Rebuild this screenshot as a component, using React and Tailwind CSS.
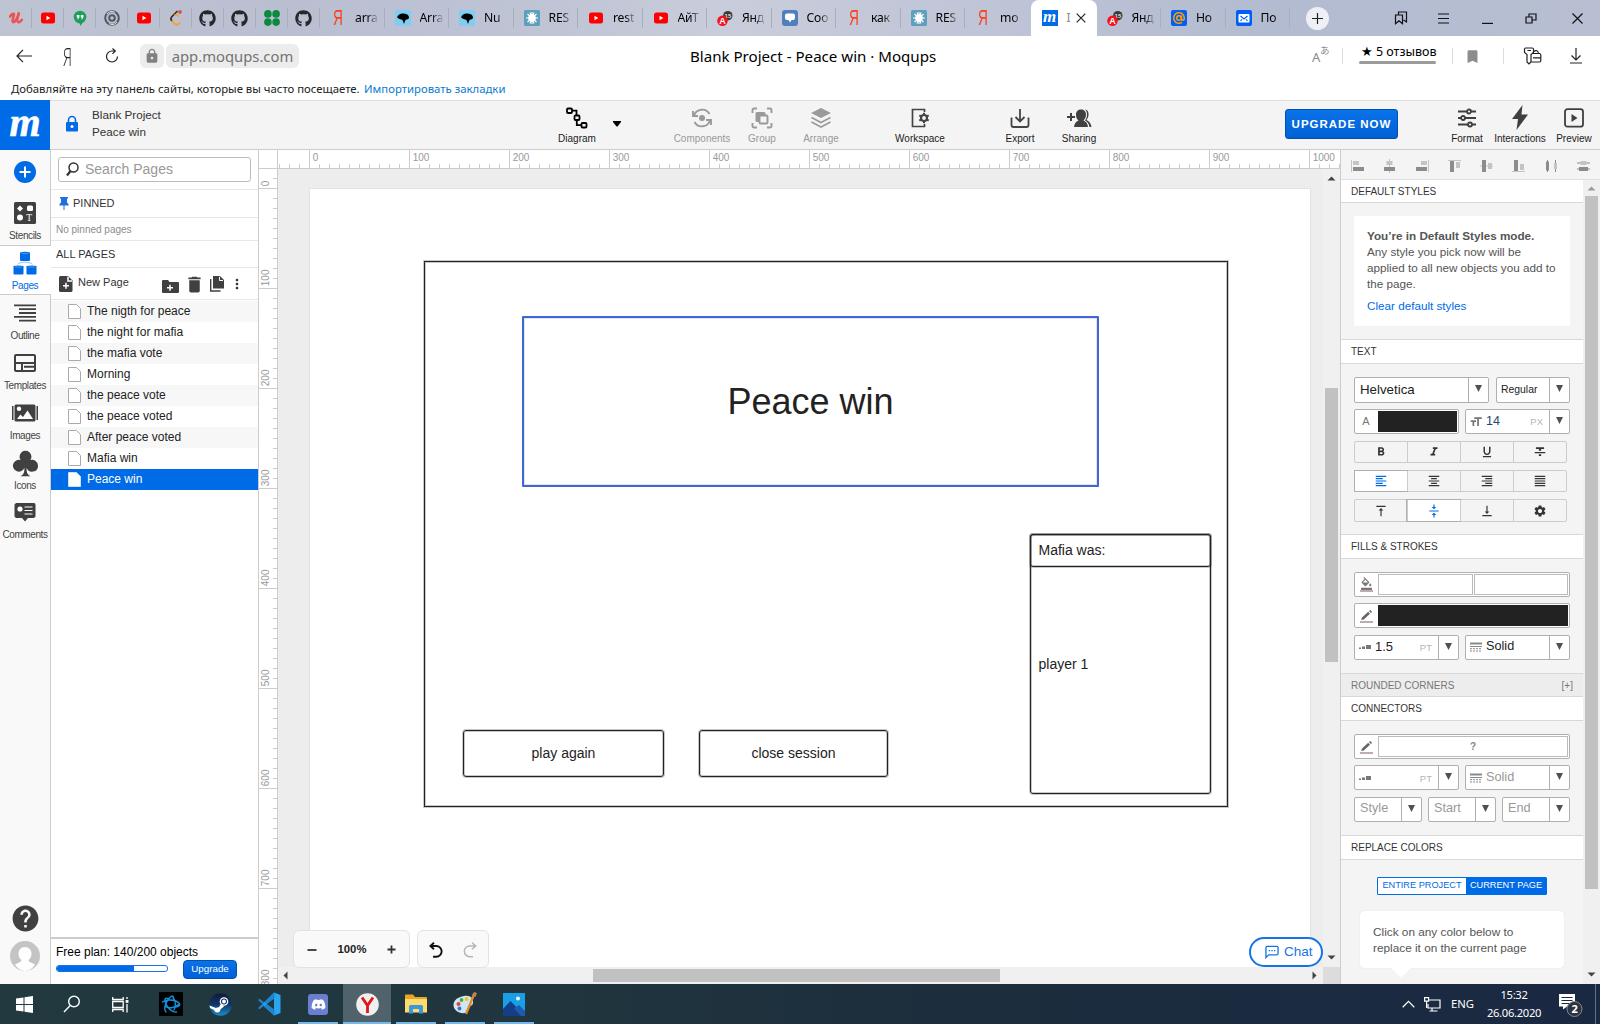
import React from "react";
import { FaGithub, FaYoutube, FaSteam, FaDiscord } from "react-icons/fa";
import { SiLeetcode } from "react-icons/si";
import {
  MdLock, MdHelp, MdBookmark, MdDelete, MdCreateNewFolder, MdMoreVert,
  MdFormatBold, MdFormatItalic, MdFormatUnderlined, MdFormatStrikethrough, MdFormatAlignLeft,
  MdFormatAlignCenter, MdFormatAlignRight, MdFormatAlignJustify, MdVerticalAlignTop,
  MdVerticalAlignCenter, MdVerticalAlignBottom, MdSettings, MdEdit, MdFormatColorFill, MdFormatSize,
} from "react-icons/md";
import { GiClubs } from "react-icons/gi";

const UI = "font-['Noto_Sans',sans-serif]";

/* ---------- browser tabs ---------- */
const Ya = () => <span className="font-['Liberation_Sans',sans-serif] text-[22px] leading-4 text-[#fc3f1d] scale-x-[.62] inline-block">Я</span>;
const Udemy = () => (
  <svg width="14" height="14" viewBox="0 0 14 14" fill="none" stroke="#ec5252" strokeLinecap="round" strokeLinejoin="round"><path d="M1 5.500C2.500 3.500 4.500 2 5 3.200c.4 1.300-2.500 6.300-1 7.800 1.500 1 4.500-3.500 5.700-8.500" strokeWidth="2.600" /><path d="M9.700 2.500C8.500 6.500 7.700 10.500 9 11.200c1.200.4 2.800-1 4-2.500" strokeWidth="2.400" /></svg>
);
const YouTube = () => (
  <svg width="16" height="16" viewBox="0 0 16 16"><rect x="1" y="2.500" width="14" height="11" rx="2.500" fill="#f00" /><path d="M6.500 5.700v4.600L10.300 8z" fill="#fff" /></svg>
);
const Bird = () => (
  <svg width="16" height="16" viewBox="0 0 16 16"><rect width="16" height="16" fill="#81cdf0" /><path d="M2 7.500C3 4 6 3 9 3.500c3 .2 5 1.800 5 4 0 1.500-1.500 2-3 2l-1 1.500-1 3-1.500-4-3-1z" fill="#000" /></svg>
);
const Rest = () => (
  <svg width="16" height="16" viewBox="0 0 16 16"><rect width="16" height="16" rx="1.500" fill="#5f9fbe" /><circle cx="8" cy="8" r="3.800" fill="#fff" /><path d="M8 2v12M2 8h12M3.500 4l9 8M12.500 4l-9 8M6 2.500l4 11M10 2.500l-4 11" stroke="#fff" strokeWidth="1.100" /></svg>
);
const YaA = () => (
  <svg width="17" height="17" viewBox="0 0 17 17"><circle cx="11.500" cy="5.500" r="5" fill="#3b3b3b" /><text x="8" y="8" fontSize="6.500" fontWeight="700" fill="#ddd" fontFamily="Liberation Sans">15</text><circle cx="5.800" cy="11" r="5.600" fill="#f5121d" /><text x="2.400" y="14.500" fontSize="9.500" fontWeight="700" fill="#fff" fontFamily="Liberation Sans">A</text></svg>
);
const ChatBlue = () => (
  <svg width="16" height="16" viewBox="0 0 16 16"><rect width="16" height="16" rx="3" fill="#4f80bd" /><path d="M5 3.500h6a2 2 0 0 1 2 2v2.500a2 2 0 0 1-2 2H9.500L8 12.500 6.500 10H5a2 2 0 0 1-2-2V5.500a2 2 0 0 1 2-2z" fill="#fff" /></svg>
);
const Moq = () => (
  <span className="flex h-4 w-4 items-center justify-center bg-[#006be6] font-['Liberation_Serif',serif] text-[17px] font-bold italic leading-3 text-white"><span className="-mt-[3px]">m</span></span>
);
const At = () => (
  <svg width="16" height="16" viewBox="0 0 16 16"><rect width="16" height="16" rx="2" fill="#005ff9" /><circle cx="8" cy="8" r="2.300" fill="none" stroke="#ff9e00" strokeWidth="1.500" /><path d="M10.500 5.500V9c0 2 3 1.500 2.800-1A5.300 5.300 0 1 0 11 12.400" fill="none" stroke="#ff9e00" strokeWidth="1.500" /></svg>
);
const Mail = () => (
  <svg width="16" height="16" viewBox="0 0 16 16"><rect width="16" height="16" rx="2" fill="#005ff9" /><rect x="2.500" y="4" width="11" height="8.500" rx="1" fill="#fff" /><path d="M4.500 6L8 9l3.500-3M4.500 10.800l1.500-1.500M11.500 10.800L10 9.300" stroke="#005ff9" strokeWidth="1.200" fill="none" /></svg>
);
const Hangouts = () => (
  <svg width="16" height="16" viewBox="0 0 16 16"><circle cx="8" cy="7" r="6.300" fill="#1e9e5a" /><path d="M7 12h4l-2.500 4z" fill="#1e9e5a" /><path d="M4.800 5h2.600v2.500L6 9.200H5.200L6 7.400H4.800zM8.800 5h2.600v2.500L10 9.200h-.8l.8-1.800H8.800z" fill="#fff" /></svg>
);
const Swirl = () => (
  <svg width="16" height="16" viewBox="0 0 16 16" fill="none" stroke="#4d5a63"><circle cx="8" cy="8" r="6.800" strokeWidth="2" /><circle cx="8" cy="8" r="4.500" stroke="#b9c0c8" strokeWidth="1.500" /><circle cx="8" cy="8" r="2.800" strokeWidth="2" /><path d="M3 4c2-3 6-3 8-1.500M13 12c-2 3-6 3-8 1.500" stroke="#dfe3e8" /></svg>
);
const Clover = () => (
  <svg width="16" height="16" viewBox="0 0 16 16" fill="#0a8a3c"><circle cx="3.900" cy="3.900" r="3.800" /><circle cx="12.100" cy="3.900" r="3.800" /><circle cx="3.900" cy="12.100" r="3.800" /><circle cx="12.100" cy="12.100" r="3.800" /></svg>
);
const Leet = () => (
  <svg width="16" height="16" viewBox="0 0 16 16" fill="none"><path d="M9.500 1L4 6.500C2.500 8 2.500 9.500 4 11" stroke="#3a3226" strokeWidth="1.700" /><path d="M4 11l2.500 2.700c1.500 1.500 3 1.500 4.500 0l1-1.200" stroke="#f6a31c" strokeWidth="1.800" /><path d="M11 6.500L9.500 5.300C8.500 4.500 7.500 4.500 6.500 5" stroke="#f6a31c" strokeWidth="1.500" /><path d="M6.500 9.300H13" stroke="#c9c2b4" strokeWidth="1.500" /><circle cx="12" cy="2" r="1.900" fill="#d9564b" /></svg>
);
const pinned = [
  <Udemy />, <YouTube />, <Hangouts />, <Swirl />, <YouTube />, <Leet />,
  <FaGithub size={17} color="#23282d" />, <FaGithub size={17} color="#23282d" />, <Clover />, <FaGithub size={17} color="#23282d" />,
];
const tabs = [
  [<Ya />, "arra"], [<Bird />, "Arra"], [<Bird />, "Nu"], [<Rest />, "RES"], [<YouTube />, "rest"], [<YouTube />, "АйТ"],
  [<YaA />, "Янд"], [<ChatBlue />, "Соо"], [<Ya />, "как"], [<Rest />, "RES"], [<Ya />, "mo"],
];
const tabs2 = [[<YaA />, "Янд"], [<At />, "Но"], [<Mail />, "По"]];

function Tab({ icon, text, last }) {
  return (
    <div className="relative flex h-9 w-[64.500px] shrink-0 items-center">
      <div className="ml-[10px] flex w-4 shrink-0 justify-center">{icon}</div>
      <div className="ml-[9px] w-[26px] shrink-0 whitespace-nowrap text-[12.200px] tracking-[-.2px] text-black [mask-image:linear-gradient(90deg,#000_12px,transparent_24px)]">{text}</div>
      {!last && <div className="ml-auto h-5 w-px shrink-0 bg-[#a9aebd]" />}
    </div>
  );
}

function TabBar() {
  return (
    <div className={"flex h-9 items-center bg-[linear-gradient(90deg,#bfc4d3_0%,#b9bed1_18%,#bfc5d5_35%,#c9cddb_45%,#bfc4d7_62%,#b2bbd0_80%,#b8bfd3_100%)] " + UI}>
      {pinned.map((p, i) => (
        <div key={i} className="flex h-9 w-8 shrink-0 items-center">
          <div className="flex w-[31px] justify-center">{p}</div>
          <div className="h-5 w-px bg-[#a9aebd]" />
        </div>
      ))}
      {tabs.map(([ic, t], i) => <Tab key={i} icon={ic} text={t} last={i === tabs.length - 1} />)}
      <div className="ml-px flex h-9 w-[66px] shrink-0 items-center rounded-t-lg bg-white">
        <div className="ml-[11px]"><Moq /></div>
        <div className="ml-[9px] w-[4px] text-[12px] text-[#888]">I</div>
        <svg className="ml-[5px]" width="10" height="10" viewBox="0 0 10 10" stroke="#222" strokeWidth="1.200"><path d="M.7.7l8.600 8.600M9.300.7L.7 9.300" /></svg>
      </div>
      {tabs2.map(([ic, t], i) => <Tab key={i} icon={ic} text={t} />)}
      <div className="ml-[16px] flex h-[23px] w-[23px] shrink-0 items-center justify-center rounded-full bg-[#eef0f5]">
        <svg width="11" height="11" viewBox="0 0 11 11" stroke="#222" strokeWidth="1.200"><path d="M5.500 0v11M0 5.500h11" /></svg>
      </div>
      <div className="ml-auto flex items-center pr-[17px]">
        <svg width="14" height="14" viewBox="0 0 14 14" fill="none" stroke="#111" strokeWidth="1.200"><path d="M1.500 12.700V4h7v8.700L5 9.800zM4.500 4V1h8v10l-3-2" /></svg>
        <svg className="ml-[30px]" width="12" height="11" viewBox="0 0 12 11" stroke="#111" strokeWidth="1.100"><path d="M0 1h11M0 5.500h11M0 10h11" /></svg>
        <svg className="ml-[32px]" width="11" height="11" viewBox="0 0 11 11" stroke="#111" strokeWidth="1.200"><path d="M0 10.400h11" /></svg>
        <svg className="ml-[32px]" width="12" height="11" viewBox="0 0 12 11" fill="none" stroke="#111" strokeWidth="1.200"><path d="M1 4h6v6H1zM4 4V1h7v6H7" /></svg>
        <svg className="ml-[35px]" width="11" height="11" viewBox="0 0 11 11" stroke="#111" strokeWidth="1.200"><path d="M.5.5l10 10M10.500.5l-10 10" /></svg>
      </div>
    </div>
  );
}

function AddressBar() {
  return (
    <div className={"flex h-10 items-center bg-white " + UI}>
      <svg className="ml-[16px]" width="16" height="14" viewBox="0 0 16 14" fill="none" stroke="#222" strokeWidth="1.200"><path d="M7 .8L1 7l6 6.200M1 7h15" /></svg>
      <div className="ml-[25px] w-[22px] text-center font-['Open_Sans',sans-serif] text-[25px] font-light leading-6 text-[#222]"><span className="inline-block scale-x-[.6]">Я</span></div>
      <svg className="ml-[26px]" width="14" height="16" viewBox="0 0 14 16" fill="none" stroke="#222" strokeWidth="1.200"><path d="M12.500 8.500a5.500 5.500 0 1 1-5.500-5.500h3M7.500.5L10.300 3 7.500 5.800" /></svg>
      <div className="ml-[21px] flex h-6 w-6 items-center justify-center rounded-md bg-[#ececec]"><MdLock size={16} color="#808080" /></div>
      <div className="ml-[2px] flex h-6 w-[133px] items-center justify-center rounded-md bg-[#ececec] text-[14.800px] text-[#737373]">app.moqups.com</div>
      <div className="ml-[391px] w-[250px] whitespace-nowrap text-[15.100px] text-black">Blank Project - Peace win · Moqups</div>
      <div className="ml-auto flex items-center pr-[17px]">
        <span className="relative h-4 w-4 text-[#8a8a8a]"><span className="absolute -left-px top-0 text-[13px]">A</span><span className="absolute left-[7px] top-[-5px] font-['Noto_Sans_CJK_JP',sans-serif] text-[9.500px]">あ</span></span>
        <div className="ml-[13px] h-4 w-px bg-[#ddd]" />
        <div className="ml-[16px] flex w-[77px] flex-col">
          <div className="-mt-[5px] whitespace-nowrap pl-0.5 text-[12.500px] leading-[18px] text-black"><span className="font-['DejaVu_Sans',sans-serif] text-[13px]">★</span> 5 отзывов</div>
          <div className="h-[3px] rounded-full bg-[#9b9b9b]" />
        </div>
        <div className="ml-[16px] h-4 w-px bg-[#ddd]" />
        <div className="ml-[11px]"><MdBookmark size={17} color="#8c8c8c" /></div>
        <div className="ml-[22px] h-4 w-px bg-[#ddd]" />
        <svg className="ml-[19px]" width="19" height="18" viewBox="0 0 19 18" fill="none" stroke="#222" strokeWidth="1.200"><path d="M2.800 1h6.400q1.300 0 1.300 1.300V5.500L8 7.500v7.500L6 17l-2-2V7.500L1.500 5.500V2.300Q1.500 1 2.800 1zM4.500 3.500h3.500M10.500 4.500Q15 2 15.500 6.500M9 6.500h7.300q1.500 0 1.500 1.500v5.500q0 1.500-1.500 1.500H8.300M10 10.800h7.500" /></svg>
        <svg className="ml-[27px]" width="14" height="16" viewBox="0 0 14 16" fill="none" stroke="#222" strokeWidth="1.200"><path d="M7 0v11.500M2.500 7.500L7 12l4.500-4.500M1 15h12" /></svg>
      </div>
    </div>
  );
}

function BookmarkBar() {
  return (
    <div className={"flex h-[24px] items-center whitespace-nowrap bg-white pl-[11px] pt-0.5 text-[11.350px] " + UI}>
      <span className="w-[353px] text-[#222]">Добавляйте на эту панель сайты, которые вы часто посещаете.</span>
      <span className="text-[#0a7bd0]">Импортировать закладки</span>
    </div>
  );
}

/* ---------- app toolbar ---------- */
function Tool({ cls, label, children, dim }) {
  return (
    <div className={"flex h-[48px] shrink-0 flex-col items-center pt-[4px] " + cls + (dim ? " text-[#9a9a9a]" : " text-[#3f3f3f]")}>
      <div className="flex h-[25px] items-center justify-center">{children}</div>
      <div className={"mt-[3px] text-[10px] leading-[12px] " + (dim ? "text-[#999]" : "text-[#1b1b1b]")}>{label}</div>
    </div>
  );
}

function Toolbar() {
  return (
    <div className="flex h-[50px] border-b border-[#ccc] border-t border-t-[#dcdcdc] bg-[#f4f4f4]">
      <div className="-mt-px flex h-[50px] w-[50px] shrink-0 items-center justify-center bg-[#006be6] font-['Liberation_Serif',serif] text-[40px] font-bold italic leading-none text-white"><span className="-mt-[5px] [-webkit-text-stroke:.6px_white]">m</span></div>
      <svg className="ml-[15px] mt-[14px] shrink-0" width="14" height="18" viewBox="0 0 14 18"><path d="M3.500 8V5a3.500 3.500 0 0 1 7 0v3" fill="none" stroke="#006be6" strokeWidth="1.600" /><rect x="1" y="7" width="12" height="9.500" rx="1" fill="#006be6" /><circle cx="7" cy="11.500" r="1.500" fill="#fff" /></svg>
      <div className="ml-[13px] mt-[6px] w-[455px] text-[11.700px] leading-[16.500px] text-[#333]"><div>Blank Project</div><div>Peace win</div></div>
      <Tool cls="w-[60px]" label="Diagram"><svg width="22" height="22" viewBox="0 0 22 22" fill="none" stroke="#000" strokeWidth="1.800"><rect x="1" y="1.500" width="5" height="4.500" rx="1" /><rect x="8.500" y="8.500" width="5" height="4.500" rx="1" /><rect x="15.500" y="16" width="5" height="4.500" rx="1" /><path d="M6 3.700h4.500v4.800M10.800 13v5.200h4.700" /></svg></Tool>
      <svg className="ml-[5px] mt-[19px] w-[10px] shrink-0" width="10" height="7" viewBox="0 0 10 7"><path d="M1 1h8v1L5.500 6.500h-1L1 2z" fill="#000" /></svg>
      <Tool dim cls="ml-[48px] w-[64px]" label="Components"><svg width="22" height="22" viewBox="0 0 22 22" fill="none" stroke="currentColor" strokeWidth="1.900"><path d="M3 8.500A8.500 8.500 0 0 1 18.500 7M19 13.500A8.500 8.500 0 0 1 3.500 15M2 4v5h5M20 18v-5h-5" /><circle cx="11" cy="11" r="3" fill="currentColor" stroke="none" /></svg></Tool>
      <Tool dim cls="ml-[8px] w-[40px]" label="Group"><svg width="22" height="22" viewBox="0 0 22 22" fill="none" stroke="currentColor" strokeWidth="1.900"><path d="M1.500 6V3a1.500 1.500 0 0 1 1.500-1.500h3M16 1.500h3A1.500 1.500 0 0 1 20.500 3v3M20.500 16v3a1.500 1.500 0 0 1-1.500 1.500h-3M6 20.500H3A1.500 1.500 0 0 1 1.500 19v-3" /><rect x="4.500" y="5" width="10" height="10" rx="1.500" fill="currentColor" stroke="none" /><rect x="8.500" y="8.500" width="8" height="8" rx="1" fill="#f4f4f4" /></svg></Tool>
      <Tool dim cls="ml-[15px] w-[48px]" label="Arrange"><svg width="22" height="22" viewBox="0 0 22 22" fill="none" stroke="currentColor" strokeWidth="1.600"><path d="M11 1l10 5-10 5L1 6z" fill="currentColor" stroke="none" /><path d="M1.500 10.500l9.500 5 9.500-5M1.500 15l9.500 5 9.500-5" /></svg></Tool>
      <Tool cls="ml-[45px] w-[60px]" label="Workspace"><svg width="20" height="22" viewBox="0 0 20 22" fill="none" stroke="#444" strokeWidth="1.700"><path d="M14.500 5V2.500h-12v17h12V17" /><circle cx="14" cy="11" r="3" strokeWidth="2.200" /><path d="M14 5.700v2M14 14.300v2M9.300 8.300l1.700 1M17 12.700l1.700 1M9.300 13.700l1.700-1M17 9.300l1.700-1" strokeWidth="2" /></svg></Tool>
      <Tool cls="ml-[50px] w-[40px]" label="Export"><svg width="20" height="22" viewBox="0 0 20 22" fill="none" stroke="#444" strokeWidth="1.800"><path d="M10 2v12.500M5.500 10L10 14.500 14.500 10M1.500 10.500V18a2 2 0 0 0 2 2h13a2 2 0 0 0 2-2v-7.500" /></svg></Tool>
      <Tool cls="ml-[17px] w-[44px]" label="Sharing"><svg width="25" height="20" viewBox="0 0 25 20" fill="#404040"><path d="M0 8h3V5h2v3h3v2H5v3H3v-3H0zM7 19c.5-4 2-5.500 4.500-6.500C9.500 11 9 9 9 6.500 9 3.500 11 1.500 14 1.500s5 2 5 5c0 2.500-1 4.500-2.500 6 2.500 1 4 2.500 4.500 6.500zM18 1.500c3 .5 3.800 3 3.500 5.500-.2 2-.8 3.500-2 5 3 1.500 4.500 3.500 5 7h-2c-.4-3-1.800-5-4.500-6.500C19.500 10.500 20 9 20 6.500c0-2-.5-3.800-2-5z" /></svg></Tool>
      <div className="ml-[184px] mt-[8px] flex h-[30px] w-[113px] shrink-0 items-center justify-center whitespace-nowrap rounded-[3px] border border-[#0052b0] bg-[linear-gradient(#0a72ea,#0061d3)] pt-px text-[11.500px] font-bold tracking-[1px] text-white">UPGRADE NOW</div>
      <Tool cls="ml-[47px] w-[44px]" label="Format"><svg width="20" height="20" viewBox="0 0 20 20" stroke="#3f3f3f" strokeWidth="1.800" fill="#f4f4f4"><path d="M1 3.500h18M1 10h18M1 16.500h18" /><circle cx="12" cy="3.500" r="2" /><circle cx="6" cy="10" r="2" /><circle cx="13" cy="16.500" r="2" /></svg></Tool>
      <Tool cls="ml-[3px] w-[56px]" label="Interactions"><svg width="18" height="25" viewBox="0 0 18 25" fill="#3f3f3f"><path d="M11.500 0L1 14h6L5.500 25 17 9.500h-6.500z" /></svg></Tool>
      <Tool cls="ml-[4px] w-[44px]" label="Preview"><svg width="20" height="20" viewBox="0 0 20 20"><rect x="1" y="1.200" width="18" height="17.500" rx="2.500" fill="none" stroke="#3f3f3f" strokeWidth="1.800" /><path d="M7.500 6v8l6-4z" fill="#3f3f3f" /></svg></Tool>
    </div>
  );
}

/* ---------- left rail ---------- */
function RailItem({ label, active, children, h = "h-[50px]" }) {
  return (
    <div className={"relative flex flex-col items-center justify-end pb-[3px] " + h + (active ? " z-10 w-[51px] border-y border-[#ccc] bg-white !pb-[2px] text-[#006be6]" : " w-[50px] text-[#404040]")}>
      <div className={"flex h-[26px] items-center " + (active ? "pr-px" : "")}>{children}</div>
      <div className={"mt-[4px] whitespace-nowrap text-[10px] leading-[12px] tracking-[-.4px] " + (active ? "pr-px text-[#006be6]" : "text-[#444]")}>{label}</div>
    </div>
  );
}

function Rail() {
  return (
    <div className="flex w-[51px] shrink-0 flex-col border-r border-[#ccc] bg-[#f9f9f9]">
      <div className="flex h-[46px] w-[50px] justify-center pt-[11px]">
        <svg width="22" height="22" viewBox="0 0 22 22"><circle cx="11" cy="11" r="11" fill="#006be6" /><path d="M11 5.500v11M5.500 11h11" stroke="#fff" strokeWidth="2" /></svg>
      </div>
      <RailItem label="Stencils" h="h-[49px]"><svg width="22" height="22" viewBox="0 0 22 22"><rect width="22" height="22" rx="1.500" fill="#404040" /><g fill="#fff"><path d="M6 3.500L9 6.500 6 9.500 3 6.500z" /><rect x="13" y="3.500" width="6" height="5.500" rx="1.500" /><circle cx="6" cy="15.500" r="3" /></g><text x="12.300" y="19" fontSize="9.500" fill="#fff" fontFamily="Liberation Serif">T</text></svg></RailItem>
      <RailItem label="Pages" active><svg width="24" height="24" viewBox="0 0 24 24" fill="#006be6"><path d="M7 1.500Q12 0 17 1.500V9q0 1-1 1H8q-1 0-1-1zM.5 15q5-1.200 10 0v7.500q0 1-1 1h-8q-1 0-1-1zM13.500 15q5-1.200 10 0v7.500q0 1-1 1h-8q-1 0-1-1z" /><path d="M4.500 13.300C6 11.500 9 11.500 12 11.200c3 .3 6 .3 7.500 2.100" fill="none" stroke="#7fb4f2" strokeWidth=".8" /><path d="M8.500 2.500h7M2 16h7M15 16h7" stroke="#66a6f0" strokeWidth=".7" /></svg></RailItem>
      <RailItem label="Outline"><svg width="22" height="18" viewBox="0 0 22 18" stroke="#404040" strokeWidth="1.800"><path d="M0 1.300h22M5 5.200h17M5 9h17M0 12.800h22M5 16.700h17" /></svg></RailItem>
      <RailItem label="Templates"><svg width="22" height="18" viewBox="0 0 22 18" fill="none" stroke="#404040" strokeWidth="2"><rect x="1" y="1" width="20" height="16" rx="1" /><path d="M1 9h20M8 9v8M10 12.700h10" /></svg></RailItem>
      <RailItem label="Images"><svg width="26" height="18" viewBox="0 0 26 18" fill="#404040"><path d="M0 2h1.500v14H0zM24.500 2H26v14h-1.500z" /><rect x="2.500" y=".5" width="21" height="17" rx="1.500" /><g fill="#fff"><circle cx="7" cy="4.800" r="2.200" /><path d="M5 15l3.500-4.500 2.500 2.500 4.500-6.500L21 15z" /></g></svg></RailItem>
      <RailItem label="Icons"><GiClubs size={29} /></RailItem>
      <RailItem label="Comments" h="h-[49px]"><svg width="22" height="19" viewBox="0 0 22 19" fill="#404040"><path d="M2 0h18a1.500 1.500 0 0 1 1.500 1.500v12L20 15h-6l-3 3.500L8 15H2L.5 13.500v-12z" /><circle cx="6" cy="6" r="2.600" fill="#fff" /><path d="M10.500 4h8M10.500 7.500h8M10.500 11h8" stroke="#fff" /></svg></RailItem>
      <div className="mt-auto flex w-[50px] flex-col items-center pb-[13px]">
        <MdHelp size={31} color="#404040" />
        <svg className="mt-[7px]" width="30" height="30" viewBox="0 0 30 30"><circle cx="15" cy="15" r="15" fill="#c4c4c4" /><path d="M15 6c4 0 6.500 3 6.500 6.500S20 18 18.500 19l.5 1.500 6 3A13 13 0 0 1 15 30a13 13 0 0 1-10-6.500l6-3 .5-1.500C10 18 8.500 16 8.500 12.500S11 6 15 6z" fill="#fff" /></svg>
      </div>
    </div>
  );
}

/* ---------- pages panel ---------- */
const pages = ["The nigth for peace", "the night for mafia", "the mafia vote", "Morning", "the peace vote", "the peace voted", "After peace voted", "Mafia win", "Peace win"];

function PagesPanel() {
  return (
    <div className="flex w-[208px] shrink-0 flex-col border-r border-[#ccc] bg-white">
      <div className="h-[40px] border-b border-[#e8e8e8] px-[7px] pt-[7px]">
        <div className="flex h-[25px] w-[193px] items-center rounded-[3px] border border-[#bbb] pl-[7px] text-[14px] text-[#999]">
          <svg className="mr-[6px]" width="13" height="15" viewBox="0 0 13 15" fill="none" stroke="#333"><circle cx="7.500" cy="5.500" r="4.500" strokeWidth="1.500" /><path d="M4.500 9L1 13.500" strokeWidth="2.200" /></svg>
          Search Pages
        </div>
      </div>
      <div className="flex h-[28px] items-center border-b border-[#e8e8e8] pl-[8px] text-[11px] text-[#333]">
        <svg width="10" height="15" viewBox="0 0 10 15" fill="#1f6fe0" className="mr-[4px]"><path d="M1 1h8v1.500H8v4L9.500 8v1.500H.5V8L2 6.500v-4H1zM4.500 9.500h1V14h-1z" /></svg>
        PINNED
      </div>
      <div className="flex h-[23px] items-center border-b border-[#e8e8e8] pl-[5px] text-[10px] text-[#8c8c8c]">No pinned pages</div>
      <div className="flex h-[27px] items-center border-b border-[#e8e8e8] pl-[5px] pt-px text-[11px] text-[#333]">ALL PAGES</div>
      <div className="flex h-[32px] items-center border-b border-[#e8e8e8] pl-[8px] text-[11px] text-[#333]">
        <svg width="14" height="16" viewBox="0 0 14 16"><path d="M1.500 0H9l4.500 4.500v10Q13.500 16 12 16H1.500Q0 16 0 14.500v-13Q0 0 1.500 0z" fill="#404040" /><path d="M9 .8V5h4M7 6.800v6M4 9.800h6" stroke="#fff" strokeWidth="1.500" fill="none" /></svg>
        <span className="-mt-[3px] ml-[5px] w-[84px]">New Page</span>
        <svg className="mt-[5px]" width="17" height="13" viewBox="0 0 17 13"><path d="M1 0h5l1.500 2H16q1 0 1 1v9q0 1-1 1H1q-1 0-1-1V1q0-1 1-1z" fill="#404040" /><path d="M8 4.700v6M5 7.700h6" stroke="#fff" strokeWidth="1.500" /></svg>
        <MdDelete size={21} color="#404040" className="ml-[5px] mt-px" />
        <svg className="ml-[5px] mt-px" width="14" height="16" viewBox="0 0 14 16" fill="#404040"><path d="M3 0h7l4 4v8.500H3z" /><path d="M9.500 .8V4.500h3.500" stroke="#fff" fill="none" /><path d="M.7 3v12h9.800" stroke="#404040" strokeWidth="1.400" fill="none" /></svg>
        <MdMoreVert size={16} color="#333" className="ml-[5px] mt-px" />
      </div>
      <div className="mt-px">
        {pages.map((p, i) => (
          <div key={p} className={"flex h-[21px] items-center pb-px pl-[17px] text-[12px] " + (i === 8 ? "bg-[#006be6] text-white" : i % 2 ? "text-[#222]" : "bg-[#f7f7f7] text-[#222]")}>
            <svg className="mr-[6px]" width="13" height="15" viewBox="0 0 13 15"><path d="M.5.500h8l4 4v10H.5z" fill="#fff" stroke={i === 8 ? "#cfe1fa" : "#aaa"} /></svg>
            <span className="-mt-px">{p}</span>
          </div>
        ))}
      </div>
      <div className="mt-auto h-[47px] border-t-2 border-[#ccc] pl-[5px] pt-[6px]">
        <div className="text-[12px] leading-[14px] text-black">Free plan: 140/200 objects</div>
        <div className="flex">
          <div className="mt-[6px] h-[7px] w-[112px] overflow-hidden rounded-[3px] border border-[#1473e6]"><div className="h-full w-[77px] bg-[#006be6]" /></div>
          <div className="ml-[15px] mt-px flex h-[19px] w-[54px] items-center justify-center rounded-sm border border-[#0052b0] bg-[linear-gradient(#0a72ea,#0061d3)] text-[9.800px] text-white">Upgrade</div>
        </div>
      </div>
    </div>
  );
}

/* ---------- rulers and canvas ---------- */
const range = (n) => Array.from({ length: n }, (_, i) => i);

function TopRuler() {
  return (
    <div className="flex h-[19px] border-b border-[#ccc] bg-white">
      <div className="w-[19px] shrink-0 border-r border-[#ccc]" />
      <svg width="1062" height="18" className="shrink-0">
        {range(107).map((i) => {
          const v = i - 3;
          const x = 31.5 + v * 10;
          return <path key={i} d={v % 10 === 0 ? `M${x} 0V18` : `M${x} 14V18`} stroke="#ccc" />;
        })}
        {range(11).map((i) => <text key={i} x={34.700 + i * 100} y="10.500" fontSize="10" fill="#999" fontFamily="Liberation Sans">{i * 100}</text>)}
      </svg>
    </div>
  );
}

function SideRuler() {
  return (
    <div className="w-[19px] shrink-0 overflow-hidden border-r border-[#ccc] bg-white">
      <svg width="18" height="815">
        {range(82).map((i) => {
          const v = i - 1;
          const y = 19.5 + v * 10;
          return <path key={i} d={v % 10 === 0 ? `M0 ${y}H18` : `M14 ${y}H18`} stroke="#ccc" />;
        })}
        {range(9).map((i) => <text key={i} transform={`translate(9.500 ${17.200 + i * 100}) rotate(-90)`} fontSize="10" fill="#999" fontFamily="Liberation Sans">{i * 100}</text>)}
      </svg>
    </div>
  );
}

const STROKE = "absolute border border-[#222] shadow-[0_0_0_1px_rgba(34,34,34,.25),inset_0_0_0_1px_rgba(34,34,34,.25)] text-[14px] text-[#222] flex items-center ";

function Canvas() {
  return (
    <div className="relative z-10 flex-1 bg-[#ededed]">
      {/* artboard; its objects are placed freely */}
      <div className="absolute bottom-0 left-[31px] top-[19px] w-[1002px] border border-b-0 border-[#e2e2e2] bg-white">
        <div className={STROKE + "left-[114px] top-[72px] h-[546px] w-[804px]"} />
        <div className="absolute left-[212px] top-[127px] flex h-[171px] w-[577px] items-center justify-center rounded-[1px] border-2 border-[#3f67d2] text-[36px] text-[#222] shadow-[inset_0_0_0_1px_rgba(34,34,34,.12)]">Peace win</div>
        <div className={STROKE + "left-[720px] top-[345px] h-[260px] w-[181px] rounded-[3px] pl-[7.500px]"}>player 1</div>
        <div className={STROKE + "left-[720px] top-[345px] h-[33px] w-[181px] rounded-[3px] pl-[7.500px]"}>Mafia was:</div>
        <div className={STROKE + "left-[153px] top-[541px] h-[47px] w-[201px] justify-center rounded-[3px]"}>play again</div>
        <div className={STROKE + "left-[389px] top-[541px] h-[47px] w-[189px] justify-center rounded-[3px]"}>close session</div>
      </div>
      {/* floating controls */}
      <div className="absolute -bottom-px left-[15px] z-20 flex h-[38px] w-[117px] items-center justify-between rounded-md border border-[#e2e2e2] bg-[#f9f9f9] px-[13px] pt-px text-[11.300px] font-bold text-[#222]">
        <svg width="10" height="10" viewBox="0 0 10 10" stroke="#333" strokeWidth="1.800"><path d="M.5 5h9" /></svg>100%
        <svg width="9" height="9" viewBox="0 0 9 9" stroke="#333" strokeWidth="1.800"><path d="M.5 4.500h8M4.500.5v8" /></svg>
      </div>
      <div className="absolute -bottom-px left-[139px] z-20 flex h-[38px] w-[72px] items-center justify-between rounded-md border border-[#e2e2e2] bg-[#f9f9f9] px-[11px] pt-px">
        <svg width="14" height="16" viewBox="0 0 14 16" fill="none" stroke="#111" strokeWidth="1.900"><path d="M5 .7L1.300 4 5 7.300M1.300 4h6a5.300 5.300 0 0 1 0 10.700H4" /></svg>
        <svg width="14" height="16" viewBox="0 0 14 16" fill="none" stroke="#b5b5b5" strokeWidth="1.500" className="-scale-x-100"><path d="M5 .7L1.300 4 5 7.300M1.300 4h6a5.300 5.300 0 0 1 0 10.700H4" /></svg>
      </div>
      <div className="absolute bottom-0 left-[971px] z-20 flex h-[30px] w-[74px] items-center rounded-full border-2 border-[#1473e6] bg-white pl-[14px] text-[13.500px] text-[#1473e6]">
        <svg className="mr-[5px]" width="14" height="14" viewBox="0 0 15 14" fill="none" stroke="#1473e6" strokeWidth="1.400"><path d="M1 13V2.500A1.500 1.500 0 0 1 2.500 1h10A1.500 1.500 0 0 1 14 2.500v6a1.500 1.500 0 0 1-1.500 1.500H4z" /><path d="M4 5.500h7" strokeDasharray="1.500 1.300" /></svg>
        Chat
      </div>
    </div>
  );
}

const Arrow = ({ dir, c = "#444" }) => (
  <svg width="9" height="9" viewBox="0 0 9 9" fill={c}><path d={{ up: "M4.500 2.500l4 4h-8z", down: "M4.500 6.500l4-4h-8z", left: "M2.500 4.500l4-4v8z", right: "M6.500 4.500l-4-4v8z" }[dir]} /></svg>
);

function Workspace() {
  return (
    <div className="flex w-[1081px] shrink-0 flex-col overflow-hidden">
      <TopRuler />
      <div className="flex min-h-0 flex-1">
        <SideRuler />
        <div className="flex min-w-0 flex-1 flex-col">
          <div className="flex min-h-0 flex-1">
            <Canvas />
            <div className="flex w-[17px] flex-col items-center bg-[#f0f0f0] py-[5px]">
              <Arrow dir="up" />
              <div className="mt-[205px] h-[274px] w-[13px] bg-[#c1c1c1]" />
              <div className="mt-auto flex"><Arrow dir="down" /></div>
            </div>
          </div>
          <div className="flex h-[17px] items-center bg-[#f0f0f0] pl-[3px]">
            <Arrow dir="left" />
            <div className="ml-[303px] h-[13px] w-[407px] bg-[#c1c1c1]" />
            <div className="ml-auto mr-[4px]"><Arrow dir="right" /></div>
            <div className="h-[17px] w-[17px] bg-[#dcdcdc]" />
          </div>
        </div>
      </div>
    </div>
  );
}

/* ---------- format panel ---------- */
const Head = ({ children, cls = "bg-white text-[#333]", h = "h-[25px] border-t" }) => (
  <div className={"flex shrink-0 items-center border-b border-[#d8d8d8] pl-[10px] text-[10px] " + h + " " + cls}>{children}</div>
);

const Select = ({ w, children, cls = "", dim }) => (
  <div className={"flex h-[26px] shrink-0 rounded-[2px] border border-[#b0b0b0] bg-white " + w}>
    <div className={"flex min-w-0 flex-1 items-center whitespace-nowrap " + cls + (dim ? " text-[#999]" : " text-[#222]")}>{children}</div>
    <div className="flex w-[20px] justify-center border-l border-[#b0b0b0] pt-[7px]"><svg width="7" height="7" viewBox="0 0 7 7"><path d="M0 0h7L3.500 7z" fill="#505050" /></svg></div>
  </div>
);

const Swatch = ({ w, icon, children, h = "h-[25px]" }) => (
  <div className={"flex shrink-0 rounded-[2px] border border-[#b0b0b0] bg-white p-px " + h + " " + w}>
    <div className="flex w-[22px] shrink-0 items-center justify-center pr-[2px] text-[#777]">{icon}</div>
    {children}
  </div>
);

const Segments = ({ items, on, h = "h-[22px]" }) => (
  <div className={"flex w-[213px] rounded-[2px] border border-[#ccc] " + h}>
    {items.map((I, i) => (
      <div key={i} className={"flex flex-1 items-center justify-center " + (i ? "border-l border-[#ccc] " : "") + (on === i ? "bg-white text-[#006be6] shadow-[0_0_0_1px_#b0b0b0]" : "text-[#333]")}><I size={14} /></div>
    ))}
  </div>
);

const Weight = () => <svg width="12" height="6" viewBox="0 0 12 6" fill="#777"><path d="M0 3.500h2V5H0zM3 2.500h3V5H3zM7 1h5v4H7z" /></svg>;
const Lines = () => <svg width="12" height="10" viewBox="0 0 12 10" stroke="#888" fill="none"><path d="M0 1.500h12" strokeWidth="2" /><path d="M0 4.500h12" /><path d="M0 6.700h12M0 9h12" strokeDasharray="2 1" /></svg>;
const Underlined = ({ I, s = 12 }) => <div className="flex flex-col items-center"><I size={s} /><div className="h-0.5 w-[13px] bg-[#bbaeae]" /></div>;
const Pencil = () => <svg width="13" height="12" viewBox="0 0 13 12" fill="#666"><path d="M2 8.500L8.200 2.800l1.800 2L3.800 10.500l-2.600.6zM9 2l1.300-1.100 1.800 2-1.300 1.200z" /></svg>;

function AlignIcons() {
  const d = "#8c8c8c", l = "#c4c4c4";
  const items = [
    <><rect y="1" width="1" height="12" fill={l} /><rect x="2" y="2" width="6" height="4" fill={l} /><rect x="2" y="8" width="11" height="4" fill={d} /></>,
    <><rect x="6" width="1" height="14" fill={l} /><rect x="3.500" y="2" width="6" height="4" fill={l} /><rect x="1" y="8" width="11" height="4" fill={d} /></>,
    <><rect x="12" y="1" width="1" height="12" fill={l} /><rect x="5" y="2" width="6" height="4" fill={l} /><rect y="8" width="11" height="4" fill={d} /></>,
    <><rect y="1" width="13" height="1" fill={l} /><rect x="2" y="2" width="4" height="11" fill={d} /><rect x="8" y="3" width="4" height="6" fill={l} /></>,
    <><rect y="6.500" width="13" height="1" fill={l} /><rect x="2" y="1" width="4" height="12" fill={d} /><rect x="8" y="4" width="4" height="6" fill={l} /></>,
    <><rect y="12" width="13" height="1" fill={l} /><rect x="2" y="1" width="4" height="11" fill={d} /><rect x="8" y="5" width="4" height="6" fill={l} /></>,
    <><path d="M2.500 1v12M10.500 1v12" stroke={d} /><rect x="1" y="2.500" width="3" height="9" fill={d} /><rect x="9" y="4" width="3" height="6" fill={l} /></>,
    <><path d="M0 4h13M0 10h13" stroke={d} /><rect x="3.500" y="2" width="6" height="4" fill={l} /><rect x="2" y="8" width="9" height="4" fill={d} /></>,
  ];
  return (
    <div className="flex h-[30px] shrink-0 items-center justify-between border-b border-[#e0e0e0] pl-[10px] pr-[10px] pt-[3px]">
      {items.map((c, i) => <svg key={i} width="13" height="14" viewBox="0 0 13 14">{c}</svg>)}
    </div>
  );
}

function FormatPanel() {
  return (
    <div className="flex w-[260px] flex-col border-l border-[#ccc] bg-[#f4f4f4]">
      <AlignIcons />
      <div className="flex min-h-0 flex-1">
        <div className="flex w-[242px] flex-col overflow-hidden">
          <Head h="h-[23px]">DEFAULT STYLES</Head>
          <div className="ml-[13px] mt-[13px] h-[110px] w-[216px] whitespace-nowrap bg-white pl-[13px] pt-[12px] text-[11.700px] leading-[16px] text-[#555]">
            <b>You’re in Default Styles mode.</b><br />Any style you pick now will be<br />applied to all new objects you add to<br />the page.
            <div className="mt-[6px] text-[#006be6]">Clear default styles</div>
          </div>
          <div className="h-[13px] shrink-0" />
          <Head>TEXT</Head>
          <div className="flex h-[170px] shrink-0 flex-col pl-[13px] pt-[13px]">
            <div className="flex gap-[7px]">
              <Select w="w-[135px]" cls="pl-[5px] pb-px text-[13.300px]">Helvetica</Select>
              <Select w="w-[74px]" cls="pl-[4px] text-[10.400px]">Regular</Select>
            </div>
            <div className="mt-[6px] flex gap-[6px]">
              <Swatch w="w-[105px]" icon={<span className="text-[11px]">A</span>}><div className="flex-1 bg-[#222]" /></Swatch>
              <Select w="w-[105px] !h-[25px]" cls="pl-[3px] text-[12.500px]"><MdFormatSize size={14} color="#777" className="mr-[3px] mt-px" /><span className="text-[#1a4a6e]">14</span><span className="ml-auto mr-[6px] pt-px text-[9.500px] text-[#b5b5b5]">PX</span></Select>
            </div>
            <div className="mt-[7px] flex flex-col gap-[7px]">
              <Segments items={[MdFormatBold, MdFormatItalic, MdFormatUnderlined, MdFormatStrikethrough]} />
              <Segments items={[MdFormatAlignLeft, MdFormatAlignCenter, MdFormatAlignRight, MdFormatAlignJustify]} on={0} />
              <Segments items={[MdVerticalAlignTop, MdVerticalAlignCenter, MdVerticalAlignBottom, MdSettings]} on={1} h="h-[23px]" />
            </div>
          </div>
          <Head>FILLS &amp; STROKES</Head>
          <div className="flex h-[114px] shrink-0 flex-col pl-[13px] pt-[13px]">
            <Swatch w="w-[216px]" icon={<Underlined I={MdFormatColorFill} s={13} />}>
              <div className="flex flex-1 gap-px"><div className="flex-1 border border-[#bbb]" /><div className="flex-1 border border-[#bbb]" /></div>
            </Swatch>
            <div className="h-[6px]" />
            <Swatch w="w-[216px]" icon={<Underlined I={Pencil} />}><div className="flex-1 bg-[#222]" /></Swatch>
            <div className="mt-[7px] flex gap-[6px]">
              <Select w="w-[105px] !h-[25px]" cls="pl-[4px] pb-[2px] text-[13px]"><Weight /><span className="ml-[4px]">1.5</span><span className="ml-auto mr-[6px] pt-[3px] text-[9.500px] text-[#b5b5b5]">PT</span></Select>
              <Select w="w-[105px] !h-[25px]" cls="pl-[4px] pb-[2px] text-[12.700px]"><Lines /><span className="ml-[4px]">Solid</span></Select>
            </div>
          </div>
          <Head h="h-[24px] border-t" cls="bg-[#ededed] text-[#777]">ROUNDED CORNERS<span className="ml-auto mr-[10px]">[+]</span></Head>
          <Head h="h-[24px]">CONNECTORS</Head>
          <div className="flex h-[114px] shrink-0 flex-col pl-[13px] pt-[13px]">
            <Swatch w="w-[216px]" icon={<Underlined I={Pencil} />}><div className="flex flex-1 items-center justify-center border border-[#bbb] text-[10px] font-bold text-[#888]">?</div></Swatch>
            <div className="mt-[6px] flex gap-[6px]">
              <Select w="w-[105px] !h-[25px]" cls="pl-[4px]"><Weight /><span className="ml-auto mr-[6px] pt-[3px] text-[9.500px] text-[#b5b5b5]">PT</span></Select>
              <Select dim w="w-[105px] !h-[25px]" cls="pl-[4px] text-[12.700px]"><Lines /><span className="ml-[4px]">Solid</span></Select>
            </div>
            <div className="mt-[7px] flex gap-[6px]">
              <Select dim w="w-[68px] !h-[25px]" cls="pl-[5px] pb-[2px] text-[12.700px]">Style</Select>
              <Select dim w="w-[68px] !h-[25px]" cls="pl-[5px] pb-[2px] text-[12.700px]">Start</Select>
              <Select dim w="w-[68px] !h-[25px]" cls="pl-[5px] pb-[2px] text-[12.700px]">End</Select>
            </div>
          </div>
          <Head>REPLACE COLORS</Head>
          <div className="ml-[36px] mt-[17px] flex h-[18px] w-[170px] shrink-0 items-center whitespace-nowrap rounded-[1px] border border-[#006be6] bg-white text-[9.200px]">
            <div className="w-[88px] text-center text-[#006be6]">ENTIRE PROJECT</div>
            <div className="flex h-[18px] flex-1 items-center justify-center bg-[#006be6] text-white">CURRENT PAGE</div>
          </div>
          <div className="ml-[19px] mt-[16px] h-[57px] w-[204px] shrink-0 rounded-[4px] bg-white pl-[13px] pt-[13px] text-[11.800px] leading-[16px] text-[#555] shadow-[0_0_1px_#ccc]">Click on any color below to<br />replace it on the current page</div>
          <svg className="ml-[50px] shrink-0" width="20" height="10" viewBox="0 0 20 10"><path d="M0 0h20L10 9.500z" fill="#fff" /></svg>
        </div>
        <div className="flex w-[17px] flex-col items-center bg-[#f0f0f0] pb-[5px] pt-[4px]">
          <Arrow dir="up" c="#999" />
          <div className="mt-[3px] h-[693px] w-[13px] bg-[#c1c1c1]" />
          <div className="mt-auto flex"><Arrow dir="down" /></div>
        </div>
      </div>
    </div>
  );
}

/* ---------- Windows taskbar ---------- */
const taskIcons = [
  [<svg width="17" height="17" viewBox="0 0 17 17" fill="#fff"><path d="M0 2.500L7.500 1.400V8H0zM8.500 1.200L17 0v8H8.500zM0 9h7.500v6.600L0 14.500zM8.500 9H17v8l-8.500-1.200z" /></svg>, "w-[48px]"],
  [<svg width="18" height="18" viewBox="0 0 18 18" fill="none" stroke="#fff" strokeWidth="1.400"><circle cx="11" cy="6.500" r="5.300" /><path d="M7.200 10.500L1 17" /></svg>, "w-[48px]"],
  [<svg width="17" height="17" viewBox="0 0 17 17" fill="none" stroke="#fff" strokeWidth="1.300"><path d="M.7 1v2.500h10.500V1M.7 16v-2.500h10.500V16M.7 5.500h10.500v6H.7zM15 1v2M15 8v8.500" /><rect x="14.300" y="4.700" width="1.500" height="1.500" /></svg>, "w-[49px]"],
  [<svg width="24" height="24" viewBox="0 0 24 24"><rect width="24" height="24" rx="1" fill="#000" /><g fill="none" stroke="#1490dc" strokeWidth="1.400" strokeLinecap="round"><path d="M7 20C4 17 7 8 12 4.500c2-1.300 3 .5 2.500 3.500M3.500 10c3-2.500 12-3 16.500 1 2 2 0 3.500-3 4M17.500 20c-4 1-10-4.500-11.500-10.500C5.500 6 7 5.500 9.500 7M6 14.500c4 2.500 11 1 13.500-2M15 18c2-3.500 2-9-1-12.500" /></g></svg>, "w-[51px]"],
  [<svg width="23" height="23" viewBox="0 0 23 23"><defs><linearGradient id="st" x1="0" y1="0" x2="0" y2="1"><stop offset="0" stopColor="#11183a" /><stop offset=".5" stopColor="#10366b" /><stop offset="1" stopColor="#1a8fc8" /></linearGradient></defs><circle cx="11.500" cy="11.500" r="11.300" fill="url(#st)" /><circle cx="15" cy="8.500" r="4.300" fill="#fff" /><circle cx="15" cy="8.500" r="2.500" fill="none" stroke="#1a3a70" strokeWidth="1.100" /><path d="M.5 12.500l6.500 2.500c1-.8 2-1 3-.8L12 10.500l3 3-3.500 2.700c0 2-1.500 3.300-3.300 3.300-1.500 0-2.800-1-3.200-2.500L1 15z" fill="#fff" /></svg>, "w-[48px]"],
  [<svg width="24" height="24" viewBox="0 0 24 24"><path d="M17 .5L23.500 3v18L17 23.500 5 12.500z" fill="#2aa5f2" /><path d="M17 6.500v11L9.500 12z" fill="#22383f" /><path d="M1 8l1.500-1.300 15 11.300v5.500zM1 16l1.500 1.300L17.500 6V.5z" fill="#1a84cf" /></svg>, "w-[49px]"],
  [<div className="flex h-[21px] w-[20px] items-center justify-center rounded-[3px] bg-[#6a7fcf]"><FaDiscord size={15} color="#fff" /></div>, "w-[40px] ml-[5px] mr-[5px]", 1],
  [<svg width="23" height="23" viewBox="0 0 23 23"><circle cx="11.500" cy="11.500" r="11.300" fill="#f0f0f0" /><path d="M6 4.500l5.500 8v7.500M17 4.500l-5.500 8" fill="none" stroke="#e0141c" strokeWidth="2.800" /></svg>, "w-[48px]", 2],
  [<svg width="22" height="20" viewBox="0 0 22 20"><path d="M0 1.500Q0 .5 1 .5h7l2 2.500h11q1 0 1 1V18H0z" fill="#e9a820" /><path d="M0 5h22v13.500H0z" fill="#fddb6c" /><path d="M4 19.500v-7q0-1.500 1.500-1.500h11q1.500 0 1.500 1.500v7h-4V15H8v4.500z" fill="#3d97dd" /></svg>, "w-[40px] mx-[4.500px]", 1],
  [<svg width="24" height="24" viewBox="0 0 24 24"><path d="M11 4c6-1 10 2 9 7-.5 3-3 2.500-4 4-1 2 0 5-4 6C6 22 .5 18 .5 13S5 5 11 4z" fill="#cfe6f4" /><circle cx="5.500" cy="12" r="2" fill="#e0442f" /><circle cx="8.500" cy="8" r="1.900" fill="#49ad3d" /><circle cx="13.500" cy="7" r="1.900" fill="#f2c21a" /><circle cx="6.500" cy="16.500" r="1.900" fill="#3370d0" /><path d="M21 2.500L13 22" stroke="#e08b2c" strokeWidth="2.400" /><path d="M19 3l2-3 3 1-1.500 4z" fill="#b98558" /></svg>, "w-[40px] mx-[4.500px]", 1],
  [<svg width="22" height="23" viewBox="0 0 22 23"><rect width="22" height="23" fill="#199fe8" /><path d="M0 16l7.500-8L22 23H0z" fill="#143e86" /><path d="M11 15.500l5-3.500 6 6v5h-4z" fill="#1e5cab" /><circle cx="15" cy="5.500" r="2" fill="#e8f4fc" /></svg>, "w-[40px] mx-[4.500px]", 1],
];

function Taskbar() {
  return (
    <div className={"flex h-10 bg-[linear-gradient(90deg,#22393f_0%,#20353e_35%,#1c2d3d_60%,#1a2942_100%)] text-[12px] text-white " + UI}>
      {taskIcons.map(([ic, cls, st], i) => (
        <div key={i} className={"flex h-10 shrink-0 items-center justify-center " + cls + (st ? " border-b-2 border-[#76b9ed] pt-0.5" : "") + (st === 2 ? " bg-[#50636a]" : "")}>{ic}</div>
      ))}
      <div className="ml-auto flex items-center">
        <svg width="13" height="8" viewBox="0 0 13 8" fill="none" stroke="#fff" strokeWidth="1.300"><path d="M.7 7.200l5.800-5.800 5.800 5.800" /></svg>
        <svg className="ml-[9px]" width="17" height="15" viewBox="0 0 17 15" fill="none" stroke="#fff" strokeWidth="1.200"><path d="M5 3h11v8H4V7M8 11v3M5.500 14h8" /><path d="M.6.600h4v3.500h-4zM2.600 4v7" /></svg>
        <span className="ml-[10px] w-[25px] text-[11.300px]">ENG</span>
        <div className="ml-[9px] w-[58px] text-center text-[11.200px] leading-[18px] tracking-[-.3px]"><div>15:32</div><div className="whitespace-nowrap">26.06.2020</div></div>
        <svg className="ml-[16px]" width="25" height="26" viewBox="0 0 25 26"><path d="M0 3h16v12.500H8l-4 3v-3H0z" fill="#fff" /><path d="M2.500 6.500h11M2.500 9.500h11M2.500 12.500h8" stroke="#1a2942" strokeWidth="1.200" /><circle cx="15.500" cy="18" r="7.500" fill="#2c3440" stroke="#888" /><text x="12.400" y="22" fontSize="11" fontWeight="700" fill="#fff" fontFamily="Noto Sans">2</text></svg>
        <div className="ml-[11px] mr-[4px] h-10 w-px bg-[#66707f]" />
      </div>
    </div>
  );
}

export default function App() {
  return (
    <div className="flex h-[1024px] w-[1600px] flex-col overflow-hidden bg-white font-['Liberation_Sans',Arial,sans-serif]">
      <TabBar />
      <AddressBar />
      <BookmarkBar />
      <Toolbar />
      <div className="flex h-[834px] shrink-0">
        <Rail />
        <PagesPanel />
        <Workspace />
        <FormatPanel />
      </div>
      <Taskbar />
    </div>
  );
}
